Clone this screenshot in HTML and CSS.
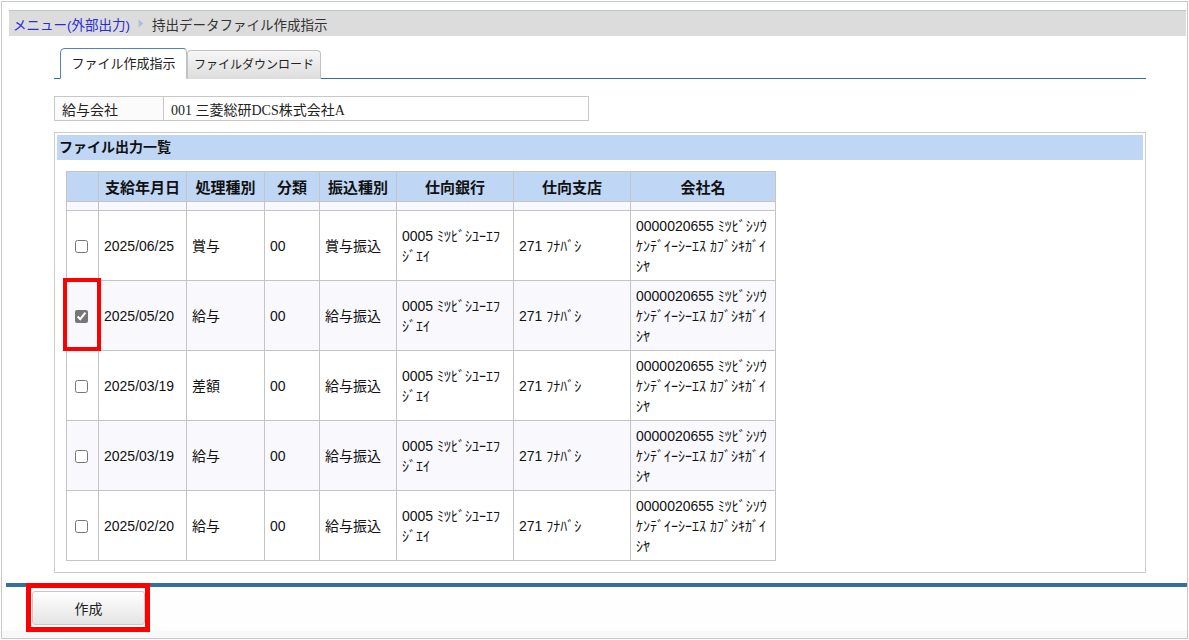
FILE: index.html
```html
<!DOCTYPE html>
<html lang="ja">
<head>
    <meta charset="UTF-8">
    <title>持出データファイル作成指示</title>
    <link rel="stylesheet" href="styles.css">
</head>
<body>
<div id="page">
    <div id="crumb">
        <a href="#">メニュー(外部出力)</a>
        <svg class="crumb-arrow" width="6" height="9" viewBox="0 0 6 9"><path d="M0.5 0.5 L5.5 4.5 L0.5 8.5 Z" fill="#a9c1da"/></svg>
        <span>持出データファイル作成指示</span>
    </div>

    <div id="main">
        <ul id="tabs">
            <li class="current">ファイル作成指示</li>
            <li>ファイルダウンロード</li>
        </ul>

        <table id="company">
            <tr>
                <th>給与会社</th>
                <td>001 三菱総研DCS株式会社A</td>
            </tr>
        </table>

        <div id="panel">
            <div class="panel-title">ファイル出力一覧</div>
            <table id="list">
                <colgroup>
                    <col style="width:32px">
                    <col style="width:88px">
                    <col style="width:78px">
                    <col style="width:55px">
                    <col style="width:77px">
                    <col style="width:117px">
                    <col style="width:117px">
                    <col style="width:145px">
                </colgroup>
                <thead>
                <tr>
                    <th></th>
                    <th>支給年月日</th>
                    <th>処理種別</th>
                    <th>分類</th>
                    <th>振込種別</th>
                    <th>仕向銀行</th>
                    <th>仕向支店</th>
                    <th>会社名</th>
                </tr>
                </thead>
                <tbody>
                <tr class="spacer"><td></td><td></td><td></td><td></td><td></td><td></td><td></td><td></td></tr>
                <tr>
                    <td class="chk"><input type="checkbox"></td>
                    <td>2025/06/25</td>
                    <td>賞与</td>
                    <td>00</td>
                    <td>賞与振込</td>
                    <td>0005 ﾐﾂﾋﾞｼﾕｰｴﾌｼﾞｴｲ</td>
                    <td>271 ﾌﾅﾊﾞｼ</td>
                    <td>0000020655 ﾐﾂﾋﾞｼｿｳｹﾝﾃﾞｲｰｼｰｴｽ ｶﾌﾞｼｷｶﾞｲｼﾔ</td>
                </tr>
                <tr class="even">
                    <td class="chk"><input type="checkbox" checked><span class="mark"></span></td>
                    <td>2025/05/20</td>
                    <td>給与</td>
                    <td>00</td>
                    <td>給与振込</td>
                    <td>0005 ﾐﾂﾋﾞｼﾕｰｴﾌｼﾞｴｲ</td>
                    <td>271 ﾌﾅﾊﾞｼ</td>
                    <td>0000020655 ﾐﾂﾋﾞｼｿｳｹﾝﾃﾞｲｰｼｰｴｽ ｶﾌﾞｼｷｶﾞｲｼﾔ</td>
                </tr>
                <tr>
                    <td class="chk"><input type="checkbox"></td>
                    <td>2025/03/19</td>
                    <td>差額</td>
                    <td>00</td>
                    <td>給与振込</td>
                    <td>0005 ﾐﾂﾋﾞｼﾕｰｴﾌｼﾞｴｲ</td>
                    <td>271 ﾌﾅﾊﾞｼ</td>
                    <td>0000020655 ﾐﾂﾋﾞｼｿｳｹﾝﾃﾞｲｰｼｰｴｽ ｶﾌﾞｼｷｶﾞｲｼﾔ</td>
                </tr>
                <tr class="even">
                    <td class="chk"><input type="checkbox"></td>
                    <td>2025/03/19</td>
                    <td>給与</td>
                    <td>00</td>
                    <td>給与振込</td>
                    <td>0005 ﾐﾂﾋﾞｼﾕｰｴﾌｼﾞｴｲ</td>
                    <td>271 ﾌﾅﾊﾞｼ</td>
                    <td>0000020655 ﾐﾂﾋﾞｼｿｳｹﾝﾃﾞｲｰｼｰｴｽ ｶﾌﾞｼｷｶﾞｲｼﾔ</td>
                </tr>
                <tr>
                    <td class="chk"><input type="checkbox"></td>
                    <td>2025/02/20</td>
                    <td>給与</td>
                    <td>00</td>
                    <td>給与振込</td>
                    <td>0005 ﾐﾂﾋﾞｼﾕｰｴﾌｼﾞｴｲ</td>
                    <td>271 ﾌﾅﾊﾞｼ</td>
                    <td>0000020655 ﾐﾂﾋﾞｼｿｳｹﾝﾃﾞｲｰｼｰｴｽ ｶﾌﾞｼｷｶﾞｲｼﾔ</td>
                </tr>
                </tbody>
            </table>
        </div>
    </div>

    <div id="bar"></div>
    <div id="foot">
        <span class="btn-wrap">
            <button type="button" id="make-btn">作成</button>
            <span class="mark"></span>
        </span>
    </div>
</div>
</body>
</html>
```

FILE: styles.css
```css
*{
    margin: 0;
    padding: 0;
    box-sizing: border-box;
}
ul{
    list-style: none;
}
body{
    font-family: "Liberation Sans", "Noto Sans CJK JP", sans-serif;
    font-size: 13px;
    color: #222;
    background: #fff;
}

#page{
    margin: 1px;
    height: 638px;
    border: 1px solid #c8c8c8;
    display: flex;
    flex-direction: column;
}

#crumb{
    margin: 8px 1px 0 7px;
    height: 26px;
    background: #dcdcdc;
    border-top: 1px solid #bcc6d0;
    display: flex;
    align-items: center;
    gap: 6px;
    padding-left: 4px;
    font-size: 13.5px;
}
#crumb a{
    color: #2a2ade;
    text-decoration: none;
}
#crumb span{
    color: #333;
}
.crumb-arrow{
    margin: 0 2px;
}

#main{
    margin: 11px 41px 0 52px;
}

#tabs{
    display: flex;
    align-items: flex-end;
    padding-left: 6px;
    border-bottom: 1px solid #2f6ea5;
    height: 32px;
}
#tabs li{
    height: 29px;
    width: 134px;
    margin-bottom: -1px;
    line-height: 28px;
    text-align: center;
    white-space: nowrap;
    font-size: 12px;
    color: #222;
    border: 1px solid #c2c2c2;
    border-bottom: none;
    border-radius: 4px 4px 0 0;
    background: linear-gradient(#f6f6f6, #dddddd);
}
#tabs li.current{
    height: 31px;
    width: 127px;
    font-size: 13px;
    background: #fff;
    border-color: #4f84b8 #c2c2c2 #fff #4f84b8;
    border-bottom: 1px solid #fff;
    border-radius: 5px 4px 0 0;
    line-height: 29px;
}

#company{
    margin-top: 17px;
    width: 535px;
    border-collapse: collapse;
    font-size: 14px;
}
#company th, #company td{
    height: 24px;
    border: 1px solid #c8c8c8;
    text-align: left;
    font-weight: normal;
    padding: 0 7px;
}
#company th{
    width: 109px;
    background: #fbfbfb;
}
#company td{
    font-family: "Liberation Serif", "Noto Sans CJK JP", serif;
}

#panel{
    margin-top: 11px;
    border: 1px solid #cbcbcb;
    padding: 2px 2px 11px;
}
.panel-title{
    height: 25px;
    line-height: 25px;
    padding-left: 2px;
    background: #bfd7f5;
    font-weight: bold;
    font-size: 14px;
    color: #111;
}

#list{
    margin: 11px 0 0 9px;
    border-collapse: collapse;
    table-layout: fixed;
    width: 709px;
    font-size: 14px;
    color: #111;
}
#list th, #list td{
    border: 1px solid #c4c4c4;
}
#list th{
    height: 30px;
    background: #bfd7f5;
    font-size: 15px;
    font-weight: bold;
    color: #111;
}
#list td{
    height: 70px;
    padding: 0 4px 0 5px;
    line-height: 20px;
    vertical-align: middle;
}
#list tr.spacer td{
    height: 9px;
    background: #f8f8ff;
}
#list tr.even td{
    background: #f8f8fd;
}
#list td.chk{
    position: relative;
    text-align: center;
    padding: 0 3px 0 0;
}
#list td.chk input{
    width: 13px;
    height: 13px;
    vertical-align: middle;
    accent-color: #767676;
}

.mark{
    position: absolute;
    border: 4px solid #ff0000;
    pointer-events: none;
}
#list td.chk .mark{
    left: -4px;
    right: -3px;
    top: -3px;
    bottom: -1px;
}

#bar{
    margin: 10px 0 0 4px;
    height: 4px;
    background: #336fa5;
}

#foot{
    flex: 1;
    padding: 4px 0 0 30px;
    background: linear-gradient(#fefefe 85%, #f8f8f8 86%);
}
.btn-wrap{
    position: relative;
    display: inline-block;
}
#make-btn{
    width: 113px;
    height: 34px;
    font-family: "Liberation Sans", "Noto Sans CJK JP", sans-serif;
    font-size: 14px;
    color: #222;
    border: 1px solid #c8c8c8;
    border-radius: 3px;
    background: linear-gradient(#ffffff, #e4e4e4);
}
.btn-wrap .mark{
    left: -6px;
    right: -5px;
    top: -8px;
    bottom: -7px;
    border-width: 5px;
}
```
